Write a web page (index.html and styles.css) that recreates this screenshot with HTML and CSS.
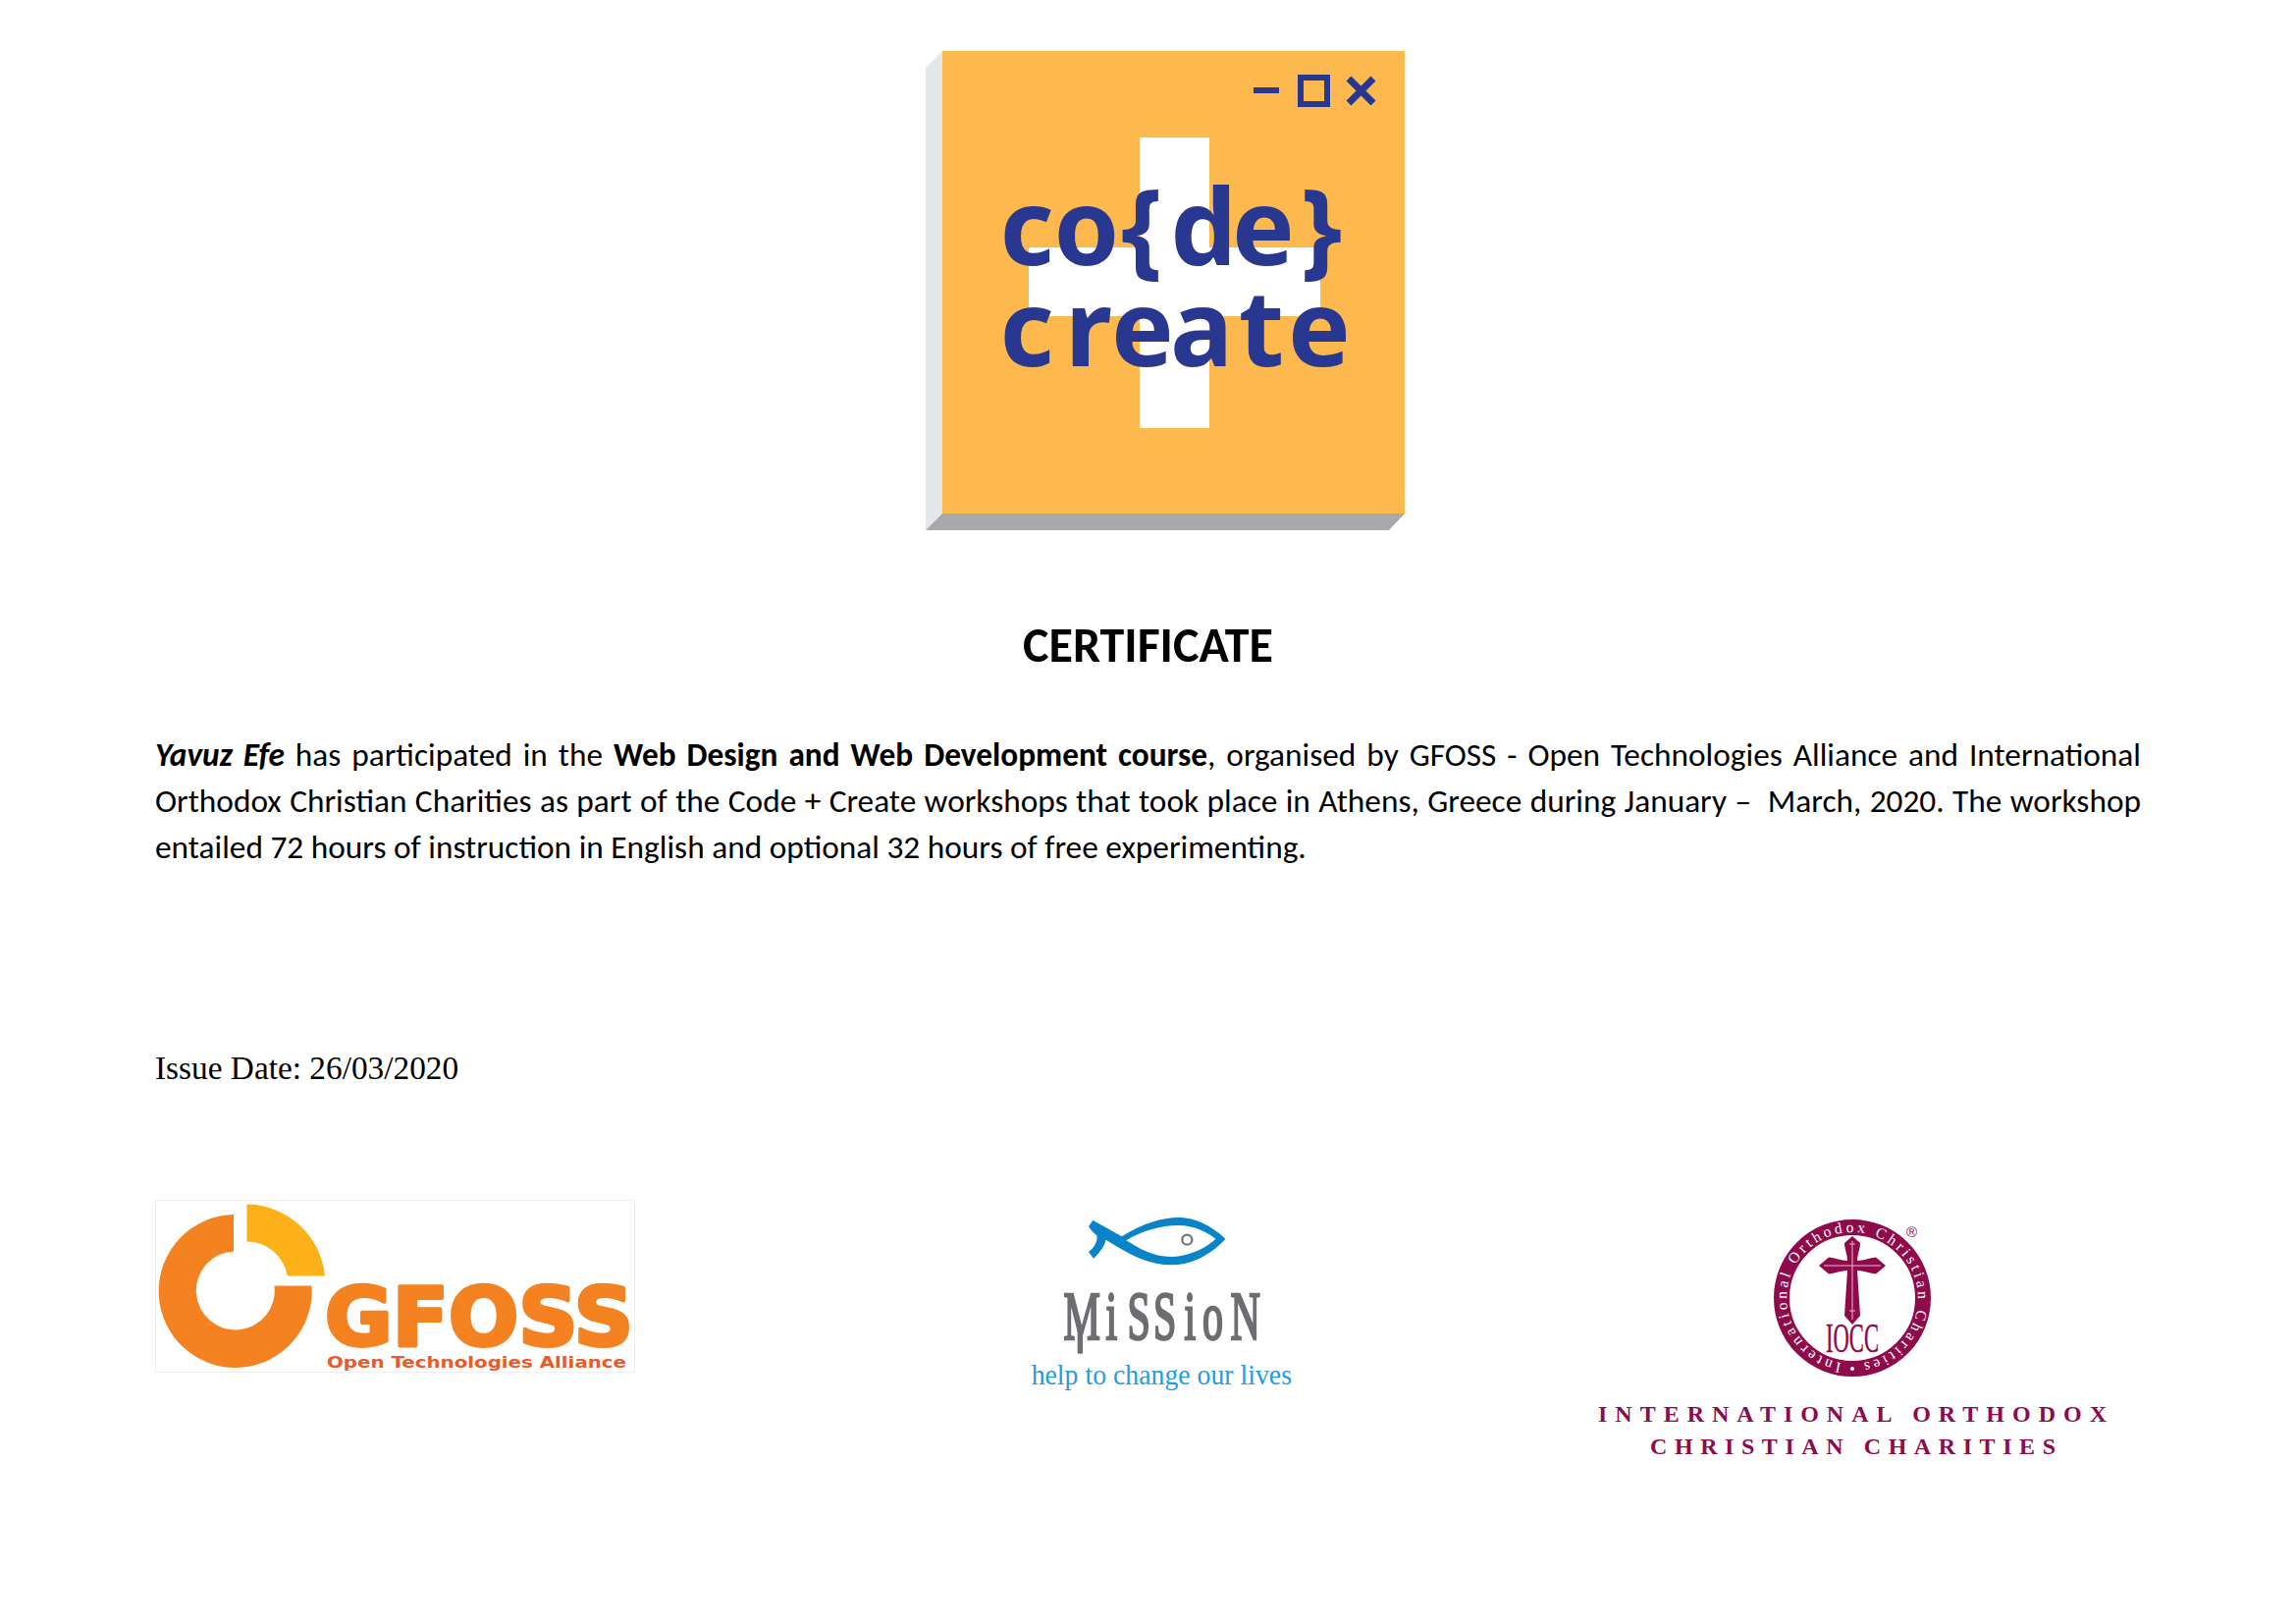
FILE: index.html
```html
<!DOCTYPE html>
<html lang="en">
<head>
<meta charset="utf-8">
<title>Certificate</title>
<link rel="stylesheet" href="styles.css">
</head>
<body>
<main class="page">
  <div class="hero">
    <svg class="cc-logo" viewBox="0 0 489 488" width="489" height="488" aria-label="code create logo">
      <polygon class="cc-side" points="0,17 17,0 17,471 0,488"/>
      <polygon class="cc-bottom" points="0,488 17,471 488,471 472,488"/>
      <rect class="cc-face" x="17" y="0" width="471" height="471"/>
      <rect class="cc-plus" x="218" y="88" width="71" height="296"/>
      <rect class="cc-plus" x="105" y="200" width="297" height="70"/>
      <rect class="cc-ink" x="334" y="37" width="26" height="6"/>
      <rect class="cc-win" x="382" y="27" width="27" height="27"/>
      <path class="cc-x" d="M431 28 L456 53 M456 28 L431 53"/>
      <text class="cc-word" x="103 164 220 283 344 403" y="218">co{de}</text>
      <text class="cc-word" x="103 166 221 281 342 401" y="321">create</text>
    </svg>
  </div>

  <h1 class="title">CERTIFICATE</h1>

  <p class="body-text"><strong><em>Yavuz Efe</em></strong> has participated in the <strong>Web Design and Web Development course</strong>, organised by GFOSS - Open Technologies Alliance and International Orthodox Christian Charities as part of the Code + Create workshops that took place in Athens, Greece during January &#8211;&nbsp; March, 2020. The workshop entailed 72 hours of instruction in English and optional 32 hours of free experimenting.</p>

  <p class="issue">Issue Date: 26/03/2020</p>

  <div class="logos">
    <svg class="gfoss" viewBox="0 0 489 176" width="489" height="176" aria-label="GFOSS logo">
      <rect class="g-frame" x="0.5" y="0.5" width="488" height="175"/>
      <path class="g-orange" d="M80 15 A78 78 0 1 0 159.5 87.5 L121.5 87.5 A40 40 0 1 1 80 52.5 Z"/>
      <path class="g-yellow" d="M93.5 4.5 A81 81 0 0 1 173 77.5 L134.8 77.5 A42 42 0 0 0 93.5 42.5 Z"/>
      <text class="g-name" x="173" y="148" textLength="314" lengthAdjust="spacingAndGlyphs">GFOSS</text>
      <text class="g-sub" x="175" y="171" textLength="305" lengthAdjust="spacingAndGlyphs">Open Technologies Alliance</text>
    </svg>

    <svg class="mission" viewBox="0 0 990 660" width="330" height="220" aria-label="Mission logo">
      <path class="m-fish" fill-rule="evenodd" d="M250 68 L338 118 C400 78 465 60 510 60 C570 60 620 92 655 125 C620 165 560 205 490 205 C410 205 350 165 290 128 C287 142 275 165 252 185 L237 165 C258 150 265 130 262 115 C252 107 245 100 237 88 Z M352 130 C395 158 440 180 490 180 C550 178 600 150 625 125 C600 105 560 84 510 84 C460 84 400 100 352 130 Z"/>
      <circle class="m-eye" cx="538" cy="128" r="15"/>
      <text class="m-name" transform="scale(0.6 1)" x="267 483 592 725 883 975 1117" y="433">MiSSioN</text>
      <path class="m-stem" d="M211 400 V476"/>
      <text class="m-tag" x="62" y="571" textLength="796" lengthAdjust="spacingAndGlyphs">help to change our lives</text>
    </svg>

    <svg class="iocc" viewBox="0 0 570 290" width="570" height="290" aria-label="IOCC logo">
      <defs>
        <path id="ring" d="M287 169 A67 67 0 1 1 287 35 A67 67 0 1 1 287 169"/>
      </defs>
      <circle class="i-ring" cx="287" cy="102" r="72"/>
      <text class="i-ringtext"><textPath href="#ring" startOffset="11" textLength="398">International Orthodox Christian Charities</textPath></text>
      <circle class="i-dot" cx="287" cy="174" r="2"/>
      <path class="i-cross" d="M287 39 L295 46 C295 52 292 58 292 64 C298 64 305 61 311 60.5 L321 69 L311 77.5 C305 77 298 74 292 74 L295 120 L287 129 L279 120 L282 74 C276 74 269 77 263 77.5 L253 69 L263 60.5 C269 61 276 64 282 64 C282 58 279 52 279 46 Z"/>
      <path class="i-line" d="M287 44 V124 M258 69 H316 M284 47 H290 M284 115 H290"/>
      <text class="i-abbr" x="260" y="157" textLength="54" lengthAdjust="spacingAndGlyphs">IOCC</text>
      <text class="i-reg" x="342" y="40">&#174;</text>
      <text class="i-name" x="28" y="228" textLength="518" lengthAdjust="spacing">INTERNATIONAL ORTHODOX</text>
      <text class="i-name" x="81" y="261" textLength="413" lengthAdjust="spacing">CHRISTIAN CHARITIES</text>
    </svg>
  </div>
</main>
</body>
</html>
```
FILE: styles.css
```css
* { box-sizing: border-box; }
html, body { margin: 0; padding: 0; background: #fff; }
.page {
  width: 2339px;
  height: 1654px;
  padding: 52px 158px 0;
  color: #000;
  font-family: Carlito, Lato, "Liberation Sans", sans-serif;
}
.hero { display: flex; justify-content: center; padding-left: 35px; }
.cc-logo, .gfoss, .mission, .iocc { display: block; flex: none; }
.cc-side { fill: #e6e7e8; }
.cc-bottom { fill: #a7a9ac; }
.cc-face { fill: #fdb84e; }
.cc-plus { fill: #fff; }
.cc-ink { fill: #283891; }
.cc-win { fill: none; stroke: #283891; stroke-width: 6; }
.cc-x { fill: none; stroke: #283891; stroke-width: 7; }
.cc-word {
  fill: #283891;
  font-family: "Noto Sans", sans-serif;
  font-weight: 700;
  font-size: 107px;
  text-anchor: middle;
}
.title {
  margin: 90px 0 0;
  font-size: 50px;
  line-height: 54px;
  font-weight: 700;
  text-align: center;
}
.body-text {
  margin: 61px 0 0;
  font-size: 33.33px;
  line-height: 47px;
  text-align: justify;
}
.issue {
  margin: 182px 0 0;
  font-family: "Liberation Serif", serif;
  font-size: 33.33px;
  line-height: 40px;
}
.logos {
  display: grid;
  grid-template-columns: 872px 570px auto;
  align-items: start;
  margin-top: 112px;
}
.gfoss { margin-top: 2px; }
.g-frame { fill: #fff; stroke: #eeeeee; stroke-width: 1; }
.g-orange { fill: #f58220; }
.g-yellow { fill: #fdb119; }
.g-name {
  fill: #f58220;
  stroke: #f58220;
  stroke-width: 4;
  stroke-linejoin: round;
  font-family: "DejaVu Sans", sans-serif;
  font-weight: 700;
  font-size: 82px;
}
.g-sub {
  fill: #ea5a2a;
  font-family: "DejaVu Sans", sans-serif;
  font-weight: 700;
  font-size: 16px;
}
.m-fish { fill: #0a84c9; }
.m-eye { fill: #fff; stroke: #77787b; stroke-width: 7; }
.m-name {
  fill: #6d6e71;
  stroke: #6d6e71;
  stroke-width: 8;
  font-family: "Liberation Serif", serif;
  font-size: 210px;
}
.m-stem { fill: none; stroke: #6d6e71; stroke-width: 16; }
.m-tag {
  fill: #2a9bd8;
  font-family: "Liberation Serif", serif;
  font-size: 88px;
}
.i-ring { fill: #fff; stroke: #8f0a4b; stroke-width: 16; }
.i-ringtext {
  fill: #fff;
  font-family: "Liberation Serif", serif;
  font-size: 15.5px;
}
.i-dot { fill: #fff; }
.i-cross { fill: #8f0a4b; }
.i-line { fill: none; stroke: #e7b9cf; stroke-width: 1; }
.i-abbr {
  fill: #8f0a4b;
  stroke: #8f0a4b;
  stroke-width: 0.4;
  font-family: "Liberation Serif", serif;
  font-size: 42px;
}
.i-reg {
  fill: #8f0a4b;
  font-family: "Liberation Sans", sans-serif;
  font-size: 15px;
}
.i-name {
  fill: #8f0a4b;
  font-family: "Liberation Serif", serif;
  font-weight: 700;
  font-size: 24px;
}
```
